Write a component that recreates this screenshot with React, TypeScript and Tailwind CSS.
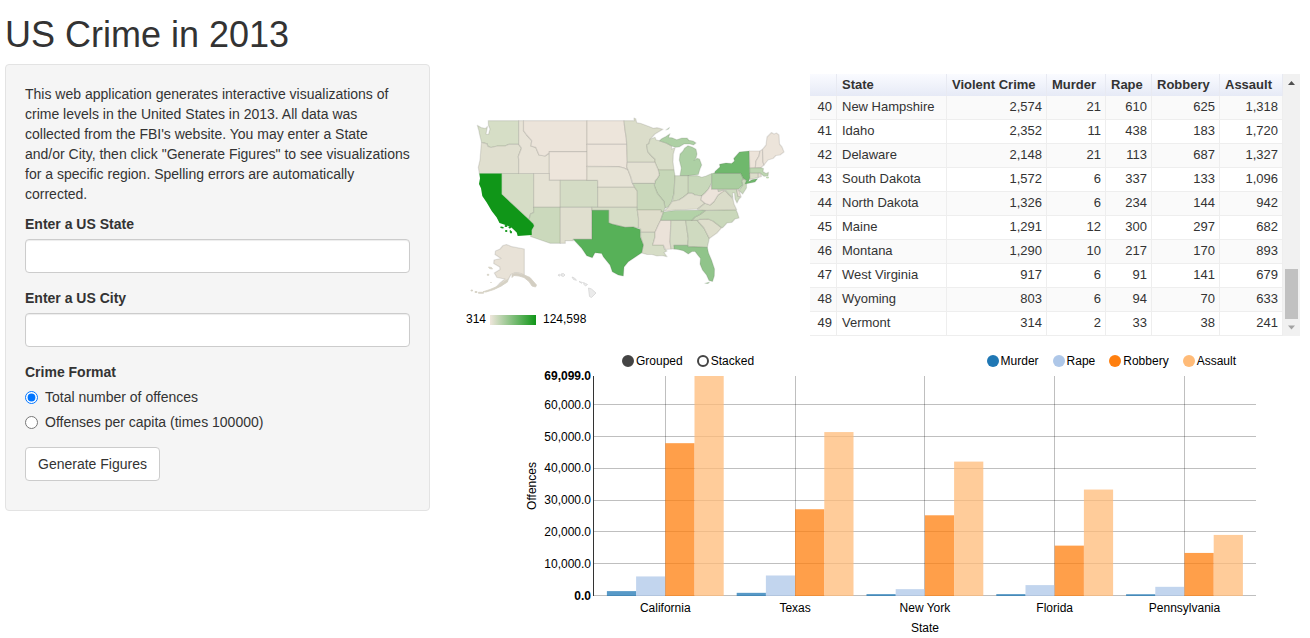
import { useState } from "react";

type Shape = { id: string; fill: string; d: string };

const STATES: Shape[] = [
  { id: "WA", fill: "#d6dec6", d: "M477.3 125.3L481 127.5L485.5 128.5L487.5 126.5L486 134L488.5 134.5L490 129L488.5 125.5L488.3 120.7H518.7V144.3H509L505 146H497.5L491 147.5L488 146.5L487 143.8L481.5 142.3L479.5 134L478.7 130Z" },
  { id: "OR", fill: "#e0dfcf", d: "M481.5 142.3L487 143.8L488 146.5L491 147.5L497.5 146H505L509 144.3H518.7L521.5 148L518.3 156.5L518.7 160V173.5H479.3L478.3 167.3L480 160L481 147Z" },
  { id: "NV", fill: "#d6ddc6", d: "M501.7 173.5H533.7V212.5L530.5 214L529 219.7L501.7 194.3Z" },
  { id: "ID", fill: "#e8e3d7", d: "M518.7 120.7H523.5V130.7L526.7 135L531.7 140.7L531 146L535.7 147.3L539 155L545 156L549.3 153V173.5H518.7V160L518.3 156.5L521.5 148L518.7 144.3Z" },
  { id: "MT", fill: "#ece4da", d: "M523.5 120.7H587V151.7H549.3V153L545 156L539 155L535.7 147.3L531 146L531.7 140.7L526.7 135L523.5 130.7Z" },
  { id: "WY", fill: "#ede5db", d: "M549.3 151.7H587V180.3H549.3Z" },
  { id: "UT", fill: "#e5e2d4", d: "M533.7 173.5H549.3V180.3H560.3V207.3H533.7Z" },
  { id: "CO", fill: "#d4dcc5", d: "M560.3 180.3H597.7V207.3H560.3Z" },
  { id: "AZ", fill: "#cbd9bc", d: "M533.7 207.3H560.3V243.3H550L530.5 236.5L531.7 230L534 226L533.3 224L529 219.7L530.5 214L533.7 212.5Z" },
  { id: "NM", fill: "#e0dfcf", d: "M560.3 207.3H592V239.3H573.3V240.7H565.3V243.3H560.3Z" },
  { id: "ND", fill: "#ede5db", d: "M587 120.7H624L625 130L626.3 138L626.7 144.3H587Z" },
  { id: "SD", fill: "#ece4da", d: "M587 144.3H626.7L627.3 162.3L626.7 166.7L628 170L624 168L618.3 166.7L587 166.3Z" },
  { id: "NE", fill: "#e7e3d6", d: "M587 166.3L618.3 166.7L624 168L628 170L630.7 176.7L631.7 182L634.7 187.3H597.7V180.3H587Z" },
  { id: "KS", fill: "#dfdfcd", d: "M597.7 187.3H634.7L637.3 191V207.3H597.7Z" },
  { id: "OK", fill: "#d6ddc6", d: "M592 207.3H637.3V210L638.5 218V228L633.3 227L625 227.3L618.3 225.7L611.7 224L608.7 222.7V210.3H592Z" },
  { id: "MN", fill: "#dbddca", d: "M624 120.7H634V118L635.7 118.7L636.7 122.7L641 123.5L645 125L649 126.5L653.3 128.3L657 127.7L663 129.3L655 134L650 139.3L649 143.5L646.7 145L647.7 151.7L651 155.5L655 159.3V162.3H627.3L626.7 144.3L626.3 138L625 130Z" },
  { id: "WI", fill: "#d8ddc8", d: "M650 139.3L655 137.3L656 139.7L659.3 140.7L666.7 143.3L671.7 146L671.5 149L675 148L673.3 154L673 162L674 170H658.3L655 163V159.3L651 155.5L647.7 151.7L646.7 145L649 143.5Z" },
  { id: "MIU", fill: "#add0a4", d: "M659.3 140.7L662 138.5L666 136.5L670 133.7L668.5 137.5L672 137.8L676.7 139.8L682 138L687 138L689 140.3L693 141L696 143L693.5 145L690 144L684 144L679 147L675 147.3L671.7 146L666.7 143.3Z" },
  { id: "MIL", fill: "#add0a4", d: "M680 175.7L681.3 168L679.3 160L680 154L683 151L684.5 148.3L688 145.7L692 147L696 149.3L697 154L696 158L694 160.5L697 158.3L699.5 159L701.7 165L700 169L698.3 174.5L688.3 175.7Z" },
  { id: "IR", fill: "#add0a4", d: "M666 130L669.5 127.5L668.5 129Z" },
  { id: "IL", fill: "#c6d7b8", d: "M658.3 170H674L675 175.7L674 193.3L671.7 201.7L668.3 207L665 208L664 201.7L657.3 193.3L654.3 186L655 181L657.3 178.3L659.3 175Z" },
  { id: "IN", fill: "#cfdac0", d: "M675 175.7H688.3V193.3L683.3 197.3L679 200L672.3 201.5L674 193.3Z" },
  { id: "OH", fill: "#c8d8ba", d: "M688.3 175.7L697 175.5L701.7 177.3L706 176L711.7 173.5V182.7L708.3 189.3L705 193L701.7 196L695 195L692 193.3H688.3Z" },
  { id: "KY", fill: "#e0dfcf", d: "M664 211L668.3 207L672.3 201.5L679 200L683.3 197.3L688.3 193.3H692L695 195L701.7 196L701 200L705 203.3L697.3 209L675 210Z" },
  { id: "MO", fill: "#cad8bb", d: "M632.7 183.3H654.3L654.5 186L657.3 193.3L664 201.7L665 208L663.5 212H661V210H637.3V191L634.7 187.3Z" },
  { id: "IA", fill: "#e4e1d3", d: "M627.3 162.3H655L658.3 170L659.3 175L657.3 178.3L655 181V183.3H632.7L630.7 176.7L628 170L626.7 166.7Z" },
  { id: "AR", fill: "#deddcb", d: "M637.3 210H661V212H663.5L660.7 220.3L658.3 225L655 232.3H640.7V229L638.5 228V218Z" },
  { id: "LA", fill: "#d6ddc6", d: "M640.7 232.3H655V237L652.7 245H663.3L664.5 249L667 251L664 252.5L667 256.7L662 255.5L657 256L652 254.5L647 254.5L641.7 253L643.3 245L640.7 237Z" },
  { id: "MS", fill: "#ebe2d9", d: "M660.7 220.3H671L670 241.7L671 249L665.5 249.5L663.3 245H652.7L655 237V232.3L658.3 225Z" },
  { id: "AL", fill: "#d7ddc7", d: "M671 220.3H685.7L688.3 238.3L687.7 245.3H674L675 249L671 249L670 241.7Z" },
  { id: "GA", fill: "#cfdac0", d: "M685.7 220.3H697.3L699.5 223L704 228L707 234L709.3 238.5L707.3 247.5L688.3 246.7L687.7 245.3L688.3 238.3Z" },
  { id: "FL", fill: "#90c48a", d: "M674 245.3H687.7L688.3 246.7L707.3 247.3L708.5 253L711.5 260L714.5 269L714.3 276L712.5 281.5L709 280.5L706.5 275L702.5 270L700 264L700.5 258.5L695 251.5L692 251.5L688.3 254L683.3 250.7L678 249.5L674 249Z" },
  { id: "FLK", fill: "#90c48a", d: "M705 283.3L709.5 282.3L708 283.5Z" },
  { id: "SC", fill: "#dedecc", d: "M697.3 220.3L700 219.3L708.3 219L713 221L721.7 227.7L717 233L709.3 238.5L707 234L704 228L699.5 223Z" },
  { id: "NC", fill: "#cad8bb", d: "M691.7 220.3L695 217L700 214.5L705.5 210.5L736 209.7L737.5 213L739 218L735 219L731.7 222.5L727 223L722.7 227.7L721.7 227.7L713 221L708.3 219L700 219.3L697.3 220.3Z" },
  { id: "TN", fill: "#b3d2a8", d: "M663.5 212L675 210.5L705.5 210.2L700 214.5L695 217L691.7 220.3H660.7Z" },
  { id: "VA", fill: "#dadcc9", d: "M697.3 209.5L705 203.3L710 205L714 201.5L718 195L722 191.5L725 190.5L729 194.5L733 199L734 204L736.7 209.7L705.5 210.3Z" },
  { id: "WV", fill: "#ece3da", d: "M701.7 196L705 193L708.3 189.3L711.7 184V189.3H718L718.5 191.5L723.3 190L724 191L718 195L714 201.5L710 205L705 203.3L701 200Z" },
  { id: "MD", fill: "#cedac0", d: "M718 189.3H736.7L738 196L741 197L739 199L737 203L735 199L734.5 193L732.5 193L733 198L729 194.5L725.5 190.5L723.3 190L718.5 191.500Z" },
  { id: "DE", fill: "#e5e0d4", d: "M736.7 189.3L738.5 189L741 196.5H738Z" },
  { id: "NJ", fill: "#cad9bc", d: "M743.3 178.3L746.5 181L746.5 188L742.7 194L739 190.5L742.7 185L741.5 181Z" },
  { id: "PA", fill: "#aacea0", d: "M711.7 173.7L715 172.5V173.3H740.7L743.3 178.3L741.5 181L742.7 185L739 189H711.7Z" },
  { id: "NY", fill: "#6fb86c", d: "M715 173.3V171.5L720 167L719.5 164.3L726 163L731.7 163.5L734.5 161L733.7 158.5L739.5 152L749.3 151L749.8 178L748.5 181.7L752 179.8L757.5 178.7L755 182L745 184L746.5 180.5L743.3 178.3L740.7 173.3Z" },
  { id: "VT", fill: "#ede4da", d: "M749.3 151H760L759 156L756 161L755.3 168H749.8Z" },
  { id: "NH", fill: "#ebe3d9", d: "M760 151L762.5 149.3L763 162L764 165L761 167.7L755.3 168L756 161L759 156Z" },
  { id: "ME", fill: "#ece4da", d: "M762.5 149.3L766 145L767 137L771.5 132.5L774 134L776.5 133L779 135L779.5 144L782 147L784 152L780 155L776 155.5L773 158.5L768 160L764 165L763 162Z" },
  { id: "MA", fill: "#bdd5b1", d: "M749.8 168L761 167.7L763.5 168.5L763 171.5L766 173.5L768.5 172.3L768 176L764 176.3L760 173.3H749.8Z" },
  { id: "CT", fill: "#dcddca", d: "M749.8 173.3H758.3V177.5L750 179.5Z" },
  { id: "RI", fill: "#e6e0d4", d: "M758.3 173.3H760.5L761.5 176.5L758.3 177.5Z" },
  { id: "AK", fill: "#e8e2d7", d: "M506.5 244.5L512 246.7L524.3 249V275L520 273.3L515.5 272.5L511 274.5L508 280L501 286L495 288.5L500 283L505 279L497 277.5L494.3 273L500 269.5L499.7 267L493.7 263.5L494 260L501 258.5L495 254.5L495.5 251L500 249L503 245.5Z" },
  { id: "TX", fill: "#57b158", d: "M592 210.3H608.7V222.7L611.7 224L618.3 225.7L625 227.3L633.3 227L640.3 229.5V237L643.3 245L641.7 252.7L635 257.3L628.3 261.7L624 267L623.3 276L618.3 275L612.3 271.7L610 265L603.3 256.7L601.7 253.5L595 252.7L592.3 257.7L586.7 255.7L581.7 248.3L573.3 239.3H592Z" },
  { id: "CA", fill: "#109618", d: "M479.3 173.5H501.7V194.3L529 219.7L533.3 224L534 226L531.7 230V235L517.7 236L516.7 232.5L511.7 227.7L507 225.5L499.5 223L496.7 217.5L491.7 211L486.7 202.5L482.3 196L481 188.3L479 184L480 178.3Z" },
];

const ISLANDS: Shape[] = [
  { id: "channel", fill: "#109618", d: "M500.5 227h2l1 1h-2zM505.5 230.5h1.500v1h-1.500zM510 230.500l1.500 1v1.500h-1zM505 225.500h2v1h-2zM509 227h1.500v1h-1.500z" },
  { id: "panhandle", fill: "#d3cec2", d: "M524.3 275L530 277.5L533 281L536.5 285L535.5 287L532 286L529 281.500L524 277.500L519 276L514 275.500L512 277.500L512 274.500L516 273Z" },
  { id: "peninsula", fill: "#d6d2c5", d: "M508 279L507.5 282L501 286L494 289.500L486 292L483 291.800L490 289.500L497 286.500L503 282.500Z" },
  { id: "aleutians", fill: "#d6d2c5", d: "M471 290h1.500v1h-1.500zM475 291.500h2v1h-2zM478.500 292.300h5v1h-5zM488.500 267l3 .5l1 1.500l-3-.5zM487.300 274.300h1.500v1h-1.500zM490.500 282l1 1z" },
  { id: "hawaii", fill: "#ebebeb", d: "M558 275l1.500-.8l1 1l-1.500 1zM561 274l2.500-.5l1.500 1.500l-1.500 1.500l-2-.5zM572 277l2.500 1l2 2.300l-3-.8zM579 281.500l3.500 1l-1 .8zM583.500 282.500l2 1l2 1l-2 1.500l-1.500-1.500zM588.500 288l3 1l4.500 4l-4.500 4.500l-2-1z" },
  { id: "capecod", fill: "#bdd5b1", d: "M766.500 177h2v1h-2z" },
];

const COLUMNS = ["State", "Violent Crime", "Murder", "Rape", "Robbery", "Assault"];

const ROWS = [
  ["40", "New Hampshire", "2,574", "21", "610", "625", "1,318"],
  ["41", "Idaho", "2,352", "11", "438", "183", "1,720"],
  ["42", "Delaware", "2,148", "21", "113", "687", "1,327"],
  ["43", "South Dakota", "1,572", "6", "337", "133", "1,096"],
  ["44", "North Dakota", "1,326", "6", "234", "144", "942"],
  ["45", "Maine", "1,291", "12", "300", "297", "682"],
  ["46", "Montana", "1,290", "10", "217", "170", "893"],
  ["47", "West Virginia", "917", "6", "91", "141", "679"],
  ["48", "Wyoming", "803", "6", "94", "70", "633"],
  ["49", "Vermont", "314", "2", "33", "38", "241"],
];

const SERIES = [
  { name: "Murder", color: "#1f77b4", dot: "bg-[#1f77b4]" },
  { name: "Rape", color: "#aec7e8", dot: "bg-[#aec7e8]" },
  { name: "Robbery", color: "#ff7f0e", dot: "bg-[#ff7f0e]" },
  { name: "Assault", color: "#ffbb78", dot: "bg-[#ffbb78]" },
];

const BARS = [
  { state: "California", values: [1380, 6000, 47950, 69099] },
  { state: "Texas", values: [840, 6300, 27150, 51450] },
  { state: "New York", values: [440, 2000, 25250, 42150] },
  { state: "Florida", values: [440, 3270, 15700, 33350] },
  { state: "Pennsylvania", values: [410, 2730, 13400, 19070] },
];

const MAX = 69099;
const BASE = 595.5;
const PLOT = 219.5;
const yOf = (v: number) => BASE - (v / MAX) * PLOT;
const centerOf = (i: number) => 665.3 + i * 129.8;

function CrimeMap() {
  return (
    <svg viewBox="460 74 350 262" className="block w-full min-w-0 flex-1" role="img" aria-label="Violent crime by state">
      <defs>
        <linearGradient id="scale">
          <stop offset="0" stopColor="#efe6dc" />
          <stop offset="1" stopColor="#109618" />
        </linearGradient>
      </defs>
      {STATES.map((s) => (
        <path key={s.id} d={s.d} fill={s.fill} stroke="#4a4a40" strokeOpacity={s.id === "CA" ? 0 : 0.14} strokeWidth="1.2" strokeLinejoin="round" />
      ))}
      {ISLANDS.map((s) => (
        <path key={s.id} d={s.d} fill={s.fill} stroke={s.id === "hawaii" ? "#d5d5d5" : s.fill} strokeWidth="0.8" />
      ))}
      <g className="font-['Liberation_Sans',Arial,sans-serif] text-[12px]" fill="#000">
        <text x="466" y="323">314</text>
        <rect x="490" y="315" width="46" height="10" fill="url(#scale)" />
        <text x="543" y="323">124,598</text>
      </g>
    </svg>
  );
}

function CrimeTable() {
  return (
    <div className="flex w-[490px] shrink-0">
      <table className="flex-1 table-fixed border-separate border-spacing-0 text-[13px] leading-4">
        <colgroup>
          <col className="w-[27px]" />
          <col className="w-[110px]" />
          <col className="w-[100px]" />
          <col className="w-[59px]" />
          <col className="w-[46px]" />
          <col className="w-[68px]" />
          <col className="w-[63px]" />
        </colgroup>
        <thead>
          <tr className="h-[22px] bg-linear-to-b from-[#fafbff] to-[#e6eaf6]">
            <th className="border-r border-[#e8eaf2] p-0" aria-label="Rank" />
            {COLUMNS.map((c) => (
              <th key={c} className="border-r border-[#e8eaf2] p-0 pl-[5px] text-left font-bold whitespace-nowrap">
                {c}
              </th>
            ))}
          </tr>
        </thead>
        <tbody>
          {ROWS.map((row) => (
            <tr key={row[0]} className="h-6 odd:bg-[#fafafa] even:bg-white">
              {row.map((cell, i) => (
                <td
                  key={i}
                  className={`border-r border-b border-[#eee] p-0 pb-[2px] whitespace-nowrap ${i === 1 ? "pl-[5px] text-left" : "pr-1 text-right"}`}
                >
                  {cell}
                </td>
              ))}
            </tr>
          ))}
        </tbody>
      </table>
      <div className="flex w-[17px] flex-col items-center bg-[#f1f1f1]" aria-hidden="true">
        <svg viewBox="0 0 17 17" className="size-[17px]"><path d="M5 11h7L8.500 7z" fill="#505050" /></svg>
        <div className="mt-auto h-[50px] w-[13px] bg-[#c1c1c1]" />
        <svg viewBox="0 0 17 17" className="size-[17px]"><path d="M5 6.500h7L8.500 10.500z" fill="#a3a3a3" /></svg>
      </div>
    </div>
  );
}

function BarChart() {
  const [mode, setMode] = useState("Grouped");
  return (
    <section className="mt-[17px] text-[12px] leading-4 text-black">
      <div className="flex h-4 items-center justify-between pr-[64px] pl-[162px]">
        <div className="flex gap-[14px]">
          {["Grouped", "Stacked"].map((m) => (
            <label key={m} className="flex items-center gap-[2px]">
              <input
                type="radio"
                name="mode"
                checked={mode === m}
                onChange={() => setMode(m)}
                className="size-3 appearance-none rounded-full border-2 border-[#444] bg-white checked:bg-[#444]"
              />
              {m}
            </label>
          ))}
        </div>
        <div className="flex gap-[14px]">
          {SERIES.map((s) => (
            <button key={s.name} type="button" className="flex items-center gap-[2px]">
              <span className={`size-3 rounded-full ${s.dot}`} />
              {s.name}
            </button>
          ))}
        </div>
      </div>
      <svg viewBox="460 369 840 266" className="block w-full overflow-visible" role="img" aria-label="Offences by state">
        <g stroke="#000" strokeOpacity="0.25" shapeRendering="crispEdges">
          {[0, 10000, 20000, 30000, 40000, 50000, 60000].map((v) => (
            <line key={v} x1="593" x2="1256" y1={yOf(v)} y2={yOf(v)} />
          ))}
          {BARS.map((b, i) => (
            <line key={b.state} x1={centerOf(i)} x2={centerOf(i)} y1="376" y2="596" />
          ))}
        </g>
        <line x1="593.5" x2="593.5" y1="376" y2="596" stroke="#333" />
        {BARS.map((b, i) =>
          b.values.map((v, j) => (
            <rect
              key={`${i}-${j}`}
              x={centerOf(i) - 58.4 + j * 29.2}
              y={yOf(v)}
              width="29.2"
              height={BASE + 0.5 - yOf(v)}
              fill={SERIES[j].color}
              fillOpacity="0.75"
            />
          )),
        )}
        <g textAnchor="end">
          {[10000, 20000, 30000, 40000, 50000, 60000].map((v) => (
            <text key={v} x="591" y={yOf(v) + 4}>{`${v / 1000},000.0`}</text>
          ))}
          <text x="591" y="380" className="font-bold">69,099.0</text>
          <text x="591" y="600" className="font-bold">0.0</text>
        </g>
        <g textAnchor="middle">
          {BARS.map((b, i) => (
            <text key={b.state} x={centerOf(i)} y="612">{b.state}</text>
          ))}
          <text x="925" y="632">State</text>
          <text transform="translate(536 486) rotate(-90)">Offences</text>
        </g>
      </svg>
    </section>
  );
}

export default function App() {
  const [format, setFormat] = useState("total");
  const field =
    "mb-[15px] block h-[34px] w-full rounded border border-[#ccc] bg-white px-3 shadow-[inset_0_1px_1px_rgba(0,0,0,0.075)] outline-none focus:border-[#66afe9]";
  return (
    <div className="bg-white pr-[10px] pl-[5px] font-['Liberation_Sans',Arial,sans-serif] text-[14px] leading-5 text-[#333]">
      <h1 className="pt-[15px] pb-[9px] text-[36px] leading-10">US Crime in 2013</h1>
      <div className="flex flex-col items-start gap-[30px] lg:flex-row">
        <form
          className="w-full max-w-[425px] shrink-0 rounded border border-[#e3e3e3] bg-[#f5f5f5] px-[19px] pt-[19px] pb-[29px]"
          onSubmit={(e) => e.preventDefault()}
        >
          <p className="mb-[10px]">
            This web application generates interactive visualizations of crime levels in the United States in 2013. All
            data was collected from the FBI's website. You may enter a State and/or City, then click "Generate Figures"
            to see visualizations for a specific region. Spelling errors are automatically corrected.
          </p>
          <label htmlFor="state" className="mb-[5px] block font-bold">Enter a US State</label>
          <input id="state" type="text" className={field} />
          <label htmlFor="city" className="mb-[5px] block font-bold">Enter a US City</label>
          <input id="city" type="text" className={field} />
          <fieldset className="mb-[15px]">
            <legend className="mb-[5px] font-bold">Crime Format</legend>
            <label className="mb-[5px] flex items-center gap-[7px]">
              <input type="radio" name="format" className="size-[13px] accent-[#0075ff]" checked={format === "total"} onChange={() => setFormat("total")} />
              Total number of offences
            </label>
            <label className="flex items-center gap-[7px]">
              <input type="radio" name="format" className="size-[13px] accent-[#0075ff]" checked={format === "capita"} onChange={() => setFormat("capita")} />
              Offenses per capita (times 100000)
            </label>
          </fieldset>
          <button type="submit" className="block h-[34px] rounded border border-[#ccc] bg-white px-3 hover:bg-[#e6e6e6]">
            Generate Figures
          </button>
        </form>
        <main className="w-full min-w-0 flex-1 pt-[10px]">
          <div className="flex">
            <CrimeMap />
            <CrimeTable />
          </div>
          <BarChart />
        </main>
      </div>
    </div>
  );
}
